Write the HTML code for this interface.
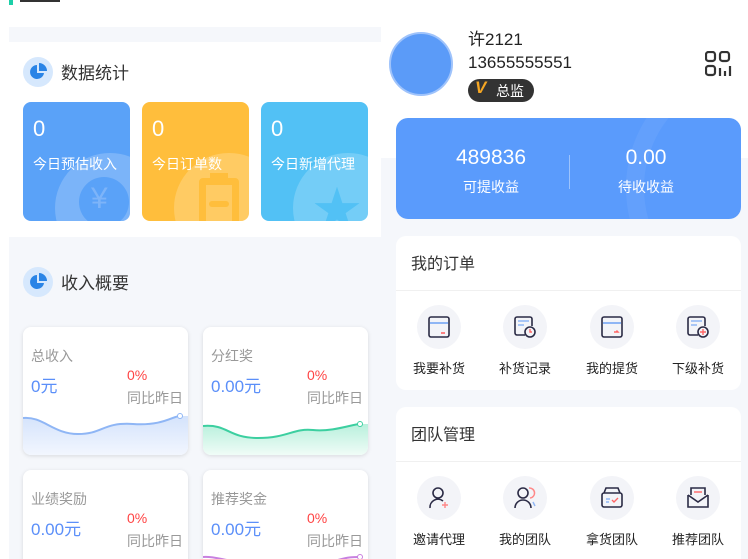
<!DOCTYPE html>
<html><head><meta charset="utf-8"><style>
*{margin:0;padding:0;box-sizing:border-box}
html{overflow:hidden;width:748px;height:559px}
body{width:748px;height:559px;overflow:hidden;background:#fff;position:relative;font-family:"Liberation Sans","Noto Sans CJK SC",sans-serif;color:#333}
.a{position:absolute}
.t{white-space:nowrap}
.sc{border-radius:8px;overflow:hidden;color:#fff}
.sc .n{position:absolute;left:10px;top:14px;font-size:22px}
.sc .l{position:absolute;left:10px;top:52px;font-size:14px}
.sc .c{position:absolute;left:32px;top:51px;width:110px;height:110px;border-radius:50%;background:rgba(255,255,255,.2)}
.ic{border-radius:8px;background:#fff;box-shadow:0 1px 4px rgba(0,0,0,.12);overflow:hidden}
.ic .h{position:absolute;left:8px;top:19px;font-size:14px;color:#999}
.ic .v{position:absolute;left:8px;top:45px;font-size:17px;color:#5b8ff9}
.ic .p{position:absolute;left:104px;top:40px;font-size:14px;color:#f44}
.ic .y{position:absolute;left:104px;top:61px;font-size:14px;color:#999}
.card{background:#fff;border-radius:10px}
.it{position:absolute;width:80px;text-align:center;font-size:13px;color:#222}
.it .ci{width:44px;height:44px;border-radius:50%;background:#f3f4f8;margin:0 auto 9px;display:flex;align-items:center;justify-content:center}
</style></head><body>
<div class="a" style="left:9px;top:0;width:4px;height:5px;background:#1ccfa8"></div>
<div class="a" style="left:20px;top:0;width:40px;height:2px;background:#333"></div>
<div class="a" style="left:9px;top:27px;width:372px;height:15px;background:#f5f7fb"></div>
<div class="a" style="left:9px;top:237px;width:372px;height:322px;background:#f5f7fb"></div>
<div class="a" style="left:381px;top:158px;width:367px;height:401px;background:#f5f7fb"></div>

<div class="a" style="left:23px;top:57px;width:30px;height:30px;border-radius:50%;background:#d6e8fd"></div>
<svg class="a" style="left:28px;top:62px" width="20" height="20" viewBox="0 0 20 20"><path d="M9 3a7 7 0 1 0 7 8H9z" fill="#2a84e6"/><path d="M11 1v8h8a8 8 0 0 0-8-8z" fill="#2a84e6"/></svg>
<div class="a t" style="left:61px;top:59px;font-size:17px">数据统计</div>

<div class="a sc" style="left:23px;top:102px;width:107px;height:119px;background:#5aa2f8"><div class="c"></div><div class="a" style="left:56px;top:75px;width:50px;height:50px;border-radius:50%;background:#5aa2f8"></div><div class="a t" style="left:68px;top:80px;font-size:30px;color:#7db4f9">¥</div><div class="n">0</div><div class="l t">今日预估收入</div></div>
<div class="a sc" style="left:142px;top:102px;width:107px;height:119px;background:#ffbe3c"><div class="c"></div><div class="a" style="left:57px;top:76px;width:40px;height:50px;border:7px solid #ffbe3c;border-radius:4px"></div><div class="a" style="left:68px;top:71px;width:18px;height:10px;background:#ffbe3c"></div><div class="a" style="left:67px;top:99px;width:20px;height:6px;border-radius:3px;background:#ffbe3c"></div><div class="n">0</div><div class="l t">今日订单数</div></div>
<div class="a sc" style="left:261px;top:102px;width:107px;height:119px;background:#52c1f5"><div class="c"></div><div class="a t" style="left:52px;top:68px;font-size:48px;color:#52c1f5">★</div><div class="n">0</div><div class="l t">今日新增代理</div></div>

<div class="a" style="left:23px;top:267px;width:30px;height:30px;border-radius:50%;background:#d6e8fd"></div>
<svg class="a" style="left:28px;top:272px" width="20" height="20" viewBox="0 0 20 20"><path d="M9 3a7 7 0 1 0 7 8H9z" fill="#2a84e6"/><path d="M11 1v8h8a8 8 0 0 0-8-8z" fill="#2a84e6"/></svg>
<div class="a t" style="left:61px;top:269px;font-size:17px">收入概要</div>

<div class="a ic" style="left:23px;top:327px;width:165px;height:128px"><div class="h t">总收入</div><div class="v t">0元</div><div class="p">0%</div><div class="y t">同比昨日</div>
<svg class="a" style="left:0;top:85px" width="165" height="43"><defs><linearGradient id="g1" x1="0" y1="0" x2="0" y2="1"><stop offset="0" stop-color="#d4e3fc"/><stop offset="1" stop-color="#f2f6fe"/></linearGradient></defs><path d="M0 6C20 4 30 22 55 22S80 10 110 12 150 4 157 4L165 4V43H0Z" fill="url(#g1)"/><path d="M0 6C20 4 30 22 55 22S80 10 110 12 150 4 157 4" fill="none" stroke="#8fb6f5" stroke-width="2"/><circle cx="157" cy="4" r="2.5" fill="#fff" stroke="#8fb6f5"/></svg></div>
<div class="a ic" style="left:203px;top:327px;width:165px;height:128px"><div class="h t">分红奖</div><div class="v t">0.00元</div><div class="p">0%</div><div class="y t">同比昨日</div>
<svg class="a" style="left:0;top:85px" width="165" height="43"><defs><linearGradient id="g2" x1="0" y1="0" x2="0" y2="1"><stop offset="0" stop-color="#b8f0dc"/><stop offset="1" stop-color="#f0fcf7"/></linearGradient></defs><path d="M0 14C25 12 25 26 55 26S90 16 110 18 150 12 157 12L165 12V43H0Z" fill="url(#g2)"/><path d="M0 14C25 12 25 26 55 26S90 16 110 18 150 12 157 12" fill="none" stroke="#3ccfa0" stroke-width="2"/><circle cx="157" cy="12" r="2.5" fill="#fff" stroke="#3ccfa0"/></svg></div>
<div class="a ic" style="left:23px;top:470px;width:165px;height:110px"><div class="h t">业绩奖励</div><div class="v t">0.00元</div><div class="p">0%</div><div class="y t">同比昨日</div></div>
<div class="a ic" style="left:203px;top:470px;width:165px;height:110px"><div class="h t">推荐奖金</div><div class="v t">0.00元</div><div class="p">0%</div><div class="y t">同比昨日</div>
<svg class="a" style="left:0;top:82px" width="165" height="10"><path d="M0 5C10 4 20 8 30 9M135 8C145 5 150 5 157 5" fill="none" stroke="#c880e0" stroke-width="2"/><circle cx="157" cy="5" r="2.5" fill="#fff" stroke="#c880e0"/></svg></div>

<div class="a" style="left:389px;top:32px;width:64px;height:64px;border-radius:50%;background:#5b9bf8;border:2px solid #9fc3fb"></div>
<div class="a t" style="left:468px;top:25px;font-size:17px;color:#222">许2121</div>
<div class="a t" style="left:468px;top:53px;font-size:17px;color:#222">13655555551</div>
<div class="a" style="left:468px;top:79px;width:66px;height:23px;border-radius:12px;background:#333"></div>
<div class="a t" style="left:475px;top:78px;font-size:17px;font-weight:bold;font-style:italic;color:#f5a623">V</div>
<div class="a t" style="left:496px;top:81px;font-size:14px;color:#fff">总监</div>
<svg class="a" style="left:705px;top:51px" width="27" height="26" viewBox="0 0 27 26" fill="none" stroke="#333" stroke-width="2.2"><rect x="1" y="1" width="9" height="9" rx="2.5"/><rect x="15" y="1" width="9" height="9" rx="2.5"/><rect x="1" y="15" width="9" height="9" rx="2.5"/><path d="M15 17v8M20 20v5M25 15v10"/></svg>

<div class="a" style="left:396px;top:118px;width:345px;height:101px;border-radius:12px;background:#5a9bfc;overflow:hidden"><div class="a" style="left:230px;top:-60px;width:260px;height:260px;border-radius:50%;border:18px solid rgba(255,255,255,.06)"></div></div>
<div class="a t" style="left:441px;top:146px;width:100px;text-align:center;font-size:21px;color:#fff">489836</div>
<div class="a t" style="left:441px;top:177px;width:100px;text-align:center;font-size:14px;color:#fff">可提收益</div>
<div class="a" style="left:569px;top:155px;width:1px;height:34px;background:rgba(255,255,255,.4)"></div>
<div class="a t" style="left:596px;top:146px;width:100px;text-align:center;font-size:21px;color:#fff">0.00</div>
<div class="a t" style="left:596px;top:177px;width:100px;text-align:center;font-size:14px;color:#fff">待收收益</div>

<div class="a card" style="left:396px;top:236px;width:345px;height:154px"></div>
<div class="a t" style="left:411px;top:250px;font-size:16px">我的订单</div>
<div class="a" style="left:396px;top:290px;width:345px;height:1px;background:#f0f0f0"></div>
<div class="a card" style="left:396px;top:407px;width:345px;height:170px"></div>
<div class="a t" style="left:411px;top:421px;font-size:16px">团队管理</div>
<div class="a" style="left:396px;top:461px;width:345px;height:1px;background:#f0f0f0"></div>

<div class="it" style="left:399px;top:305px"><div class="ci"><svg width="22" height="22" viewBox="0 0 22 22" fill="none"><rect x="1" y="1" width="20" height="20" rx="2" stroke="#2b2b45" stroke-width="1.6"/><path d="M2 7h18" stroke="#8fb6f5" stroke-width="2"/><path d="M13 17h4" stroke="#f66" stroke-width="1.6"/></svg></div>我要补货</div>
<div class="it" style="left:485px;top:305px"><div class="ci"><svg width="22" height="22" viewBox="0 0 22 22" fill="none"><path d="M11 19H3a2 2 0 0 1-2-2V3a2 2 0 0 1 2-2h13a2 2 0 0 1 2 2v7" stroke="#2b2b45" stroke-width="1.6"/><path d="M4 5h11M4 9h6" stroke="#8fb6f5" stroke-width="1.6"/><circle cx="16" cy="16" r="5" stroke="#2b2b45" stroke-width="1.6"/><path d="M16 13v3h2" stroke="#f66" stroke-width="1.4"/></svg></div>补货记录</div>
<div class="it" style="left:572px;top:305px"><div class="ci"><svg width="22" height="22" viewBox="0 0 22 22" fill="none"><rect x="1" y="1" width="20" height="20" rx="2" stroke="#2b2b45" stroke-width="1.6"/><path d="M2 7h18" stroke="#8fb6f5" stroke-width="2"/><path d="M13 16h4l-1.5-1.5" stroke="#f66" stroke-width="1.4"/></svg></div>我的提货</div>
<div class="it" style="left:658px;top:305px"><div class="ci"><svg width="22" height="22" viewBox="0 0 22 22" fill="none"><path d="M11 19H3a2 2 0 0 1-2-2V3a2 2 0 0 1 2-2h13a2 2 0 0 1 2 2v7" stroke="#2b2b45" stroke-width="1.6"/><path d="M4 5h11M4 9h6" stroke="#8fb6f5" stroke-width="1.6"/><circle cx="16" cy="16" r="5" stroke="#2b2b45" stroke-width="1.6"/><path d="M16 13v6M13 16h6" stroke="#f66" stroke-width="1.4"/></svg></div>下级补货</div>

<div class="it" style="left:399px;top:476px"><div class="ci"><svg width="22" height="22" viewBox="0 0 22 22" fill="none"><circle cx="10" cy="6" r="5" stroke="#2b2b45" stroke-width="1.6"/><path d="M2 21a8 8 0 0 1 13-7" stroke="#2b2b45" stroke-width="1.6"/><path d="M17 15v6M14 18h6" stroke="#f88" stroke-width="1.4"/></svg></div>邀请代理</div>
<div class="it" style="left:485px;top:476px"><div class="ci"><svg width="22" height="22" viewBox="0 0 22 22" fill="none"><circle cx="9" cy="6" r="5" stroke="#2b2b45" stroke-width="1.6"/><path d="M1 21a8 8 0 0 1 16 0" stroke="#2b2b45" stroke-width="1.6"/><path d="M15 1a5 5 0 0 1 1 10" stroke="#f88" stroke-width="1.5"/><path d="M19 15l2 4" stroke="#8fb6f5" stroke-width="1.5"/></svg></div>我的团队</div>
<div class="it" style="left:572px;top:476px"><div class="ci"><svg width="22" height="22" viewBox="0 0 22 22" fill="none"><rect x="1" y="6" width="20" height="14" rx="2" stroke="#2b2b45" stroke-width="1.6"/><path d="M3 6l2-5h12l2 5" stroke="#2b2b45" stroke-width="1.6"/><path d="M5 12h4M5 15h3" stroke="#8fb6f5" stroke-width="1.4"/><path d="M11 13l2 2 4-4" stroke="#f66" stroke-width="1.4"/></svg></div>拿货团队</div>
<div class="it" style="left:658px;top:476px"><div class="ci"><svg width="22" height="22" viewBox="0 0 22 22" fill="none"><path d="M1 8v12h20V8" stroke="#2b2b45" stroke-width="1.6"/><path d="M1 8l10 7 10-7" stroke="#2b2b45" stroke-width="1.6"/><path d="M4 8V1h14v7" stroke="#2b2b45" stroke-width="1.6"/><path d="M7 5h8" stroke="#f66" stroke-width="1.4"/></svg></div>推荐团队</div>
</body></html>
